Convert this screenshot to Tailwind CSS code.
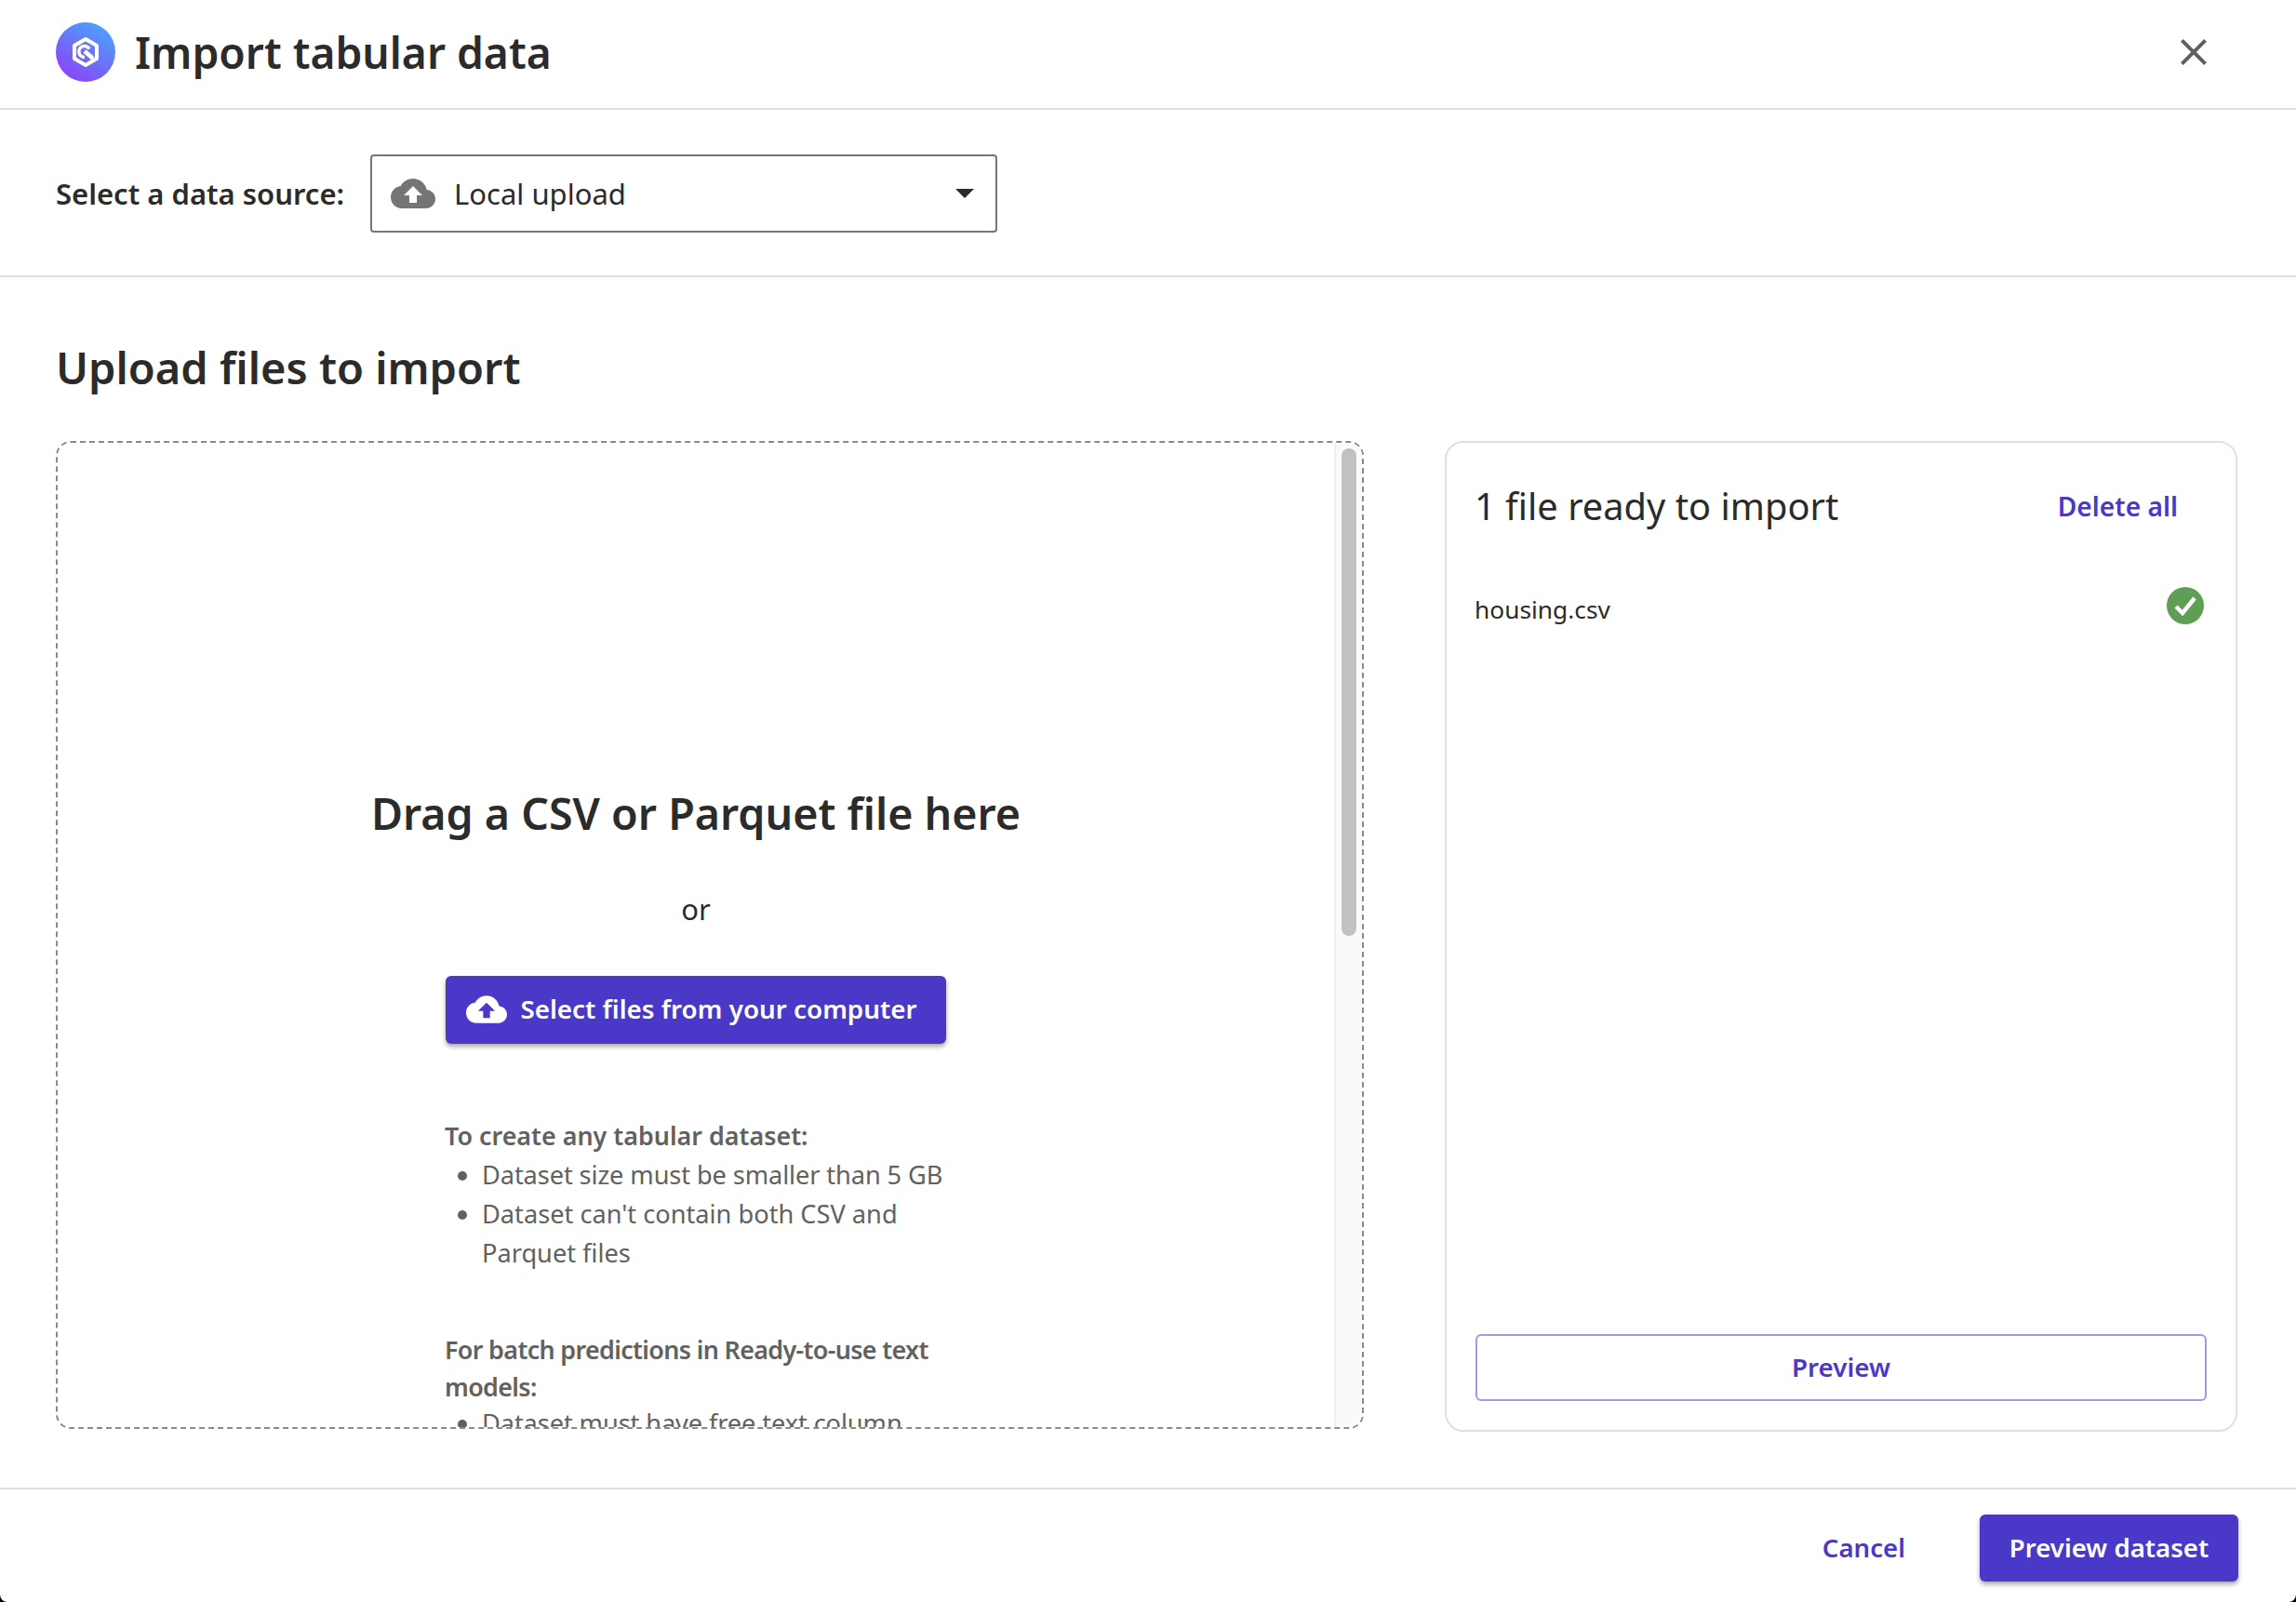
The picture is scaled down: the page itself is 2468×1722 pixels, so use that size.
<!DOCTYPE html>
<html>
<head>
<meta charset="utf-8">
<script src="https://cdn.jsdelivr.net/npm/@tailwindcss/browser@4"></script>
<title>Import tabular data</title>
</head>
<body class="bg-black">
<div class="flex h-[1722px] w-[2468px] flex-col overflow-hidden rounded-b-[8px] bg-white font-['Noto_Sans',sans-serif] text-[#2b2b2b]">
  <header class="flex h-[118px] shrink-0 items-center border-b-2 border-[#e0e0e0] pb-[4px] pl-[60px] pr-[86px]">
    <svg class="h-[64px] w-[64px] shrink-0" viewBox="0 0 64 64">
      <defs><linearGradient id="lg" x1="0.85" y1="0.05" x2="0.25" y2="0.95"><stop offset="0" stop-color="#4aa4fb"/><stop offset="1" stop-color="#8a46f6"/></linearGradient></defs>
      <circle cx="32" cy="32" r="32" fill="url(#lg)"/>
      <path d="M32 18 44 25V39L32 46 20 39V25Z" fill="none" stroke="#fff" stroke-width="4" stroke-linejoin="round"/>
      <path d="M36 28.5A6 6 0 1 0 31 37.5" fill="none" stroke="#fff" stroke-width="3.5"/>
      <path d="M31 31 40 39" stroke="#fff" stroke-width="4.5"/>
    </svg>
    <h1 class="ml-[21px] mt-[3px] text-[46.2px] font-semibold leading-none">Import tabular data</h1>
    <svg class="ml-auto h-[48px] w-[48px] text-[#5f5f5f]" viewBox="0 0 24 24" fill="currentColor"><path d="M19 6.41 17.59 5 12 10.59 6.41 5 5 6.41 10.59 12 5 17.59 6.41 19 12 13.41 17.59 19 19 17.59 13.41 12z"/></svg>
  </header>

  <section class="flex h-[180px] shrink-0 items-center border-b-2 border-[#e0e0e0] pl-[60px] pt-[2px]">
    <span class="text-[31px] font-semibold">Select a data source:</span>
    <div class="ml-[28px] flex h-[84px] w-[674px] items-center rounded-[4px] border-2 border-[#757575] pl-[20px] pr-[23px]">
      <svg class="h-[48px] w-[48px] text-[#757575]" viewBox="0 0 24 24" fill="currentColor"><path d="M19.35 10.04C18.67 6.59 15.64 4 12 4 9.11 4 6.6 5.64 5.35 8.04 2.34 8.36 0 10.91 0 14c0 3.31 2.69 6 6 6h13c2.76 0 5-2.24 5-5 0-2.64-2.05-4.78-4.65-4.96zM14 13v4h-4v-4H7l5-5 5 5h-3z"/></svg>
      <span class="ml-[20px] text-[31px]">Local upload</span>
      <span class="ml-auto h-0 w-0 border-x-[10px] border-t-[10px] border-x-transparent border-t-[#2b2b2b]"></span>
    </div>
  </section>

  <main class="flex min-h-0 flex-1 flex-col px-[60px]">
    <h2 class="mt-[66px] text-[47px] font-semibold leading-[62px]">Upload files to import</h2>
    <div class="mt-[48px] flex h-[1065px] items-start gap-[87px]">
      <div class="relative flex h-[1062px] w-[1406px] shrink-0 flex-col items-center overflow-hidden rounded-[16px] border-2 border-dashed border-[#8a8a8a] pr-[30px]">
        <h3 class="mt-[367px] shrink-0 text-[46.6px] font-semibold leading-[62px]">Drag a CSV or Parquet file here</h3>
        <p class="mt-[51px] shrink-0 text-[31px] leading-[42px]">or</p>
        <button class="mt-[51px] flex h-[73px] w-[538px] shrink-0 items-center justify-center gap-[14px] rounded-[6px] bg-[#4a39c9] pb-[2px] pr-[9px] text-[27.8px] font-semibold text-white shadow-[0_3px_5px_rgba(0,0,0,0.35)]">
          <svg class="h-[44px] w-[44px]" viewBox="0 0 24 24" fill="currentColor"><path d="M19.35 10.04C18.67 6.59 15.64 4 12 4 9.11 4 6.6 5.64 5.35 8.04 2.34 8.36 0 10.91 0 14c0 3.31 2.69 6 6 6h13c2.76 0 5-2.24 5-5 0-2.64-2.05-4.78-4.65-4.96zM14 13v4h-4v-4H7l5-5 5 5h-3z"/></svg>
          Select files from your computer
        </button>
        <div class="mr-[2px] mt-[78px] w-[538px] shrink-0 text-[27.2px] leading-[42px] text-[#616161]">
          <p class="text-[26.9px] font-semibold">To create any tabular dataset:</p>
          <ul class="list-disc pl-[40px]">
            <li class="tracking-[-0.1px]">Dataset size must be smaller than 5 GB</li>
            <li>Dataset can't contain both CSV and Parquet files</li>
          </ul>
          <p class="mt-[63px] text-[26.9px] leading-[40px] font-semibold tracking-[-0.65px]">For batch predictions in Ready-to-use text models:</p>
          <ul class="list-disc pl-[40px]">
            <li class="leading-[38px] tracking-[-0.1px]">Dataset must have free text column</li>
          </ul>
        </div>
        <div class="absolute inset-y-0 right-0 w-[30px] border-l-2 border-[#efefef] bg-[#fafafa]">
          <div class="mx-auto mt-[6px] h-[524px] w-[16px] rounded-full bg-[#c1c1c1]"></div>
        </div>
      </div>
      <div class="flex h-full w-[852px] shrink-0 flex-col rounded-[20px] border-2 border-[#e0e0e0] px-[30px] pb-[31px]">
        <div class="mt-[42px] flex items-center justify-between pr-[32px]">
          <span class="text-[39.8px] leading-[52px]">1 file ready to import</span>
          <span class="text-[28.2px] font-semibold text-[#4a39c9]">Delete all</span>
        </div>
        <div class="mt-[61px] flex items-center justify-between pr-[4px]">
          <span class="relative top-[5px] text-[26.3px]">housing.csv</span>
          <svg class="h-[40px] w-[40px]" viewBox="0 0 40 40"><circle cx="20" cy="20" r="20" fill="#5f9f55"/><path d="M10 21 17 28 30 12" fill="none" stroke="#fff" stroke-width="4.5"/></svg>
        </div>
        <button class="mx-[1px] mt-auto flex h-[72px] items-center justify-center rounded-[6px] border-2 border-[#a299e6] text-[27.8px] font-semibold text-[#4a39c9]">Preview</button>
      </div>
    </div>
  </main>

  <footer class="flex h-[123px] shrink-0 items-center justify-end border-t-2 border-[#e0e0e0] pr-[62px] pt-[5px]">
    <span class="mr-[80px] text-[27.6px] font-semibold text-[#4a39c9]">Cancel</span>
    <button class="h-[72px] w-[278px] rounded-[6px] bg-[#4a39c9] text-[27.6px] font-semibold text-white shadow-[0_3px_5px_rgba(0,0,0,0.35)]">Preview dataset</button>
  </footer>
</div>
</body>
</html>
